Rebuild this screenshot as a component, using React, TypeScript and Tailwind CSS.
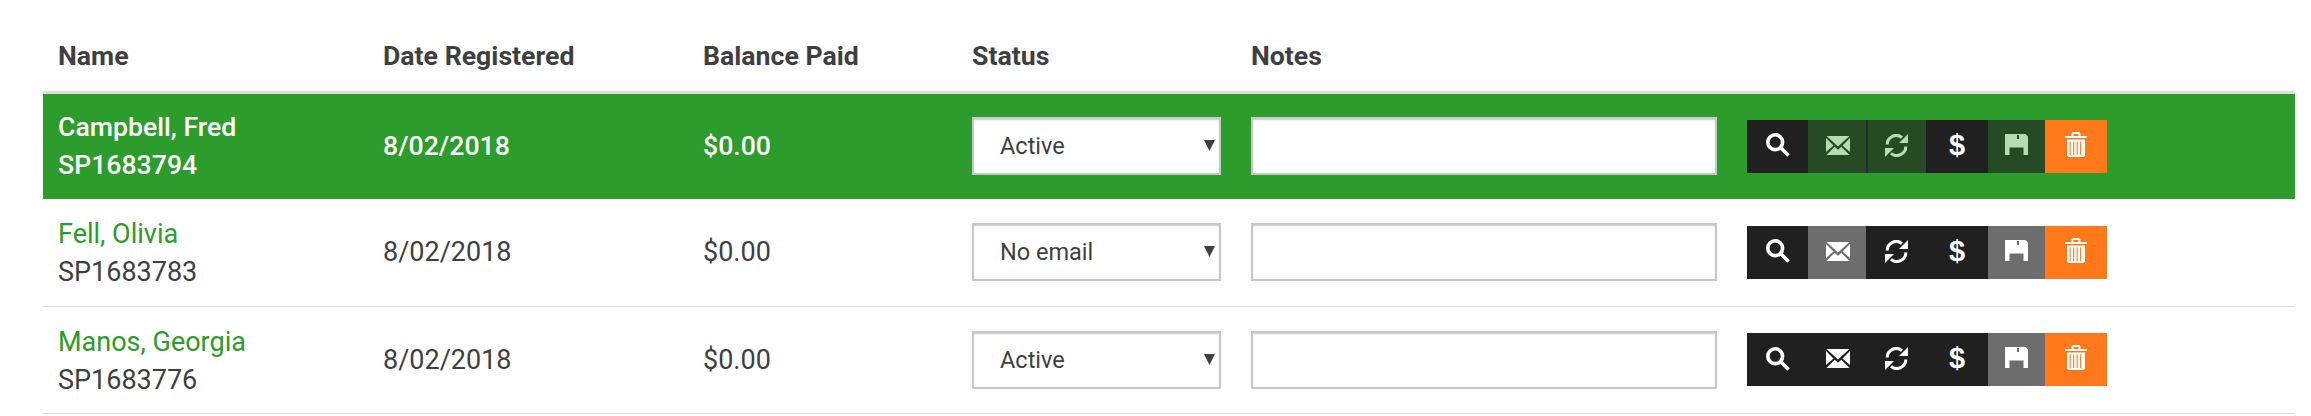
import { ReactNode } from "react";

type Member = {
  name: string;
  id: string;
  date: string;
  balance: string;
  status: string;
  selected?: boolean;
  mailOff?: boolean;
  refreshOff?: boolean;
};

const members: Member[] = [
  { name: "Campbell, Fred", id: "SP1683794", date: "8/02/2018", balance: "$0.00", status: "Active", selected: true, mailOff: true, refreshOff: true },
  { name: "Fell, Olivia", id: "SP1683783", date: "8/02/2018", balance: "$0.00", status: "No email", mailOff: true },
  { name: "Manos, Georgia", id: "SP1683776", date: "8/02/2018", balance: "$0.00", status: "Active" },
];

const SearchIcon = () => (
  <svg width="24" height="24" viewBox="0 0 24 24" fill="none" stroke="currentColor" strokeWidth="3.6">
    <circle cx="9.2" cy="9.2" r="7.4" />
    <path d="M14 14l8.5 8.5" />
  </svg>
);

const MailIcon = () => (
  <svg width="24" height="19" viewBox="0 0 24 19" fill="currentColor">
    <path d="M0.5 0H23.5L12 10.5Z" />
    <path d="M0 2L7.5 9.5L0 16Z" />
    <path d="M24 2L16.5 9.5L24 16Z" />
    <path d="M8.7 10.7L12 13.8L15.3 10.7L23.5 19H0.5Z" />
  </svg>
);

const RefreshIcon = () => (
  <svg width="23" height="23" viewBox="0 0 23 23" fill="currentColor">
    <path d="M2.2 10.5A9 9 0 0 1 17 3.6" fill="none" stroke="currentColor" strokeWidth="3" />
    <path d="M23 0V9H14Z" />
    <path d="M20.8 12.5A9 9 0 0 1 6 19.4" fill="none" stroke="currentColor" strokeWidth="3" />
    <path d="M0 23V14H9Z" />
  </svg>
);

const SaveIcon = () => (
  <svg width="23" height="21" viewBox="0 0 23 21" fill="currentColor">
    <path
      fillRule="evenodd"
      d="M0 0H20.5L23 2.5V21H18.5V13.5H4.5V21H0ZM12 1V5H14V1Z"
    />
  </svg>
);

const TrashIcon = () => (
  <svg width="22" height="25" viewBox="0 0 22 25" fill="currentColor">
    <path fillRule="evenodd" d="M6.5 4V1.5L8 0H14L15.5 1.5V4H22V6H0V4ZM8.5 4H13.5V2H8.5Z" />
    <path d="M2 7.5H20V23.5L18.5 25H3.5L2 23.5Z" />
    <g fill="#ff7819">
      <rect x="4.6" y="9.5" width="1.1" height="13.5" />
      <rect x="8.1" y="9.5" width="1.1" height="13.5" />
      <rect x="11.6" y="9.5" width="1.1" height="13.5" />
      <rect x="15.1" y="9.5" width="1.1" height="13.5" />
    </g>
  </svg>
);

const ActionButton = ({
  children,
  width,
  off,
  orange,
}: {
  children: ReactNode;
  width: string;
  off?: boolean;
  orange?: boolean;
}) => (
  <button
    type="button"
    className={`relative flex h-[53px] shrink-0 items-center justify-center text-white ${width} ${orange ? "bg-[#ff7819]" : "bg-[#202020]"} ${off ? "opacity-65" : ""}`}
  >
    {children}
  </button>
);

const Row = ({ member }: { member: Member }) => {
  const cell = "px-[15px] align-middle";
  return (
    <tr
      className={
        member.selected
          ? "h-[107px] bg-[#2c9c2c] text-[26.67px] font-medium text-white"
          : "h-[107px] border-b-[1px] border-[#dddddd] text-[#3f3f3f]"
      }
    >
      <td className={`${cell} ${member.selected ? "" : "pt-[2px]"}`}>
        <a href="#" className={member.selected ? "block text-white" : "block text-[#2c9c2c]"}>
          {member.name}
        </a>
        <div>{member.id}</div>
      </td>
      <td className={cell}>{member.date}</td>
      <td className={cell}>{member.balance}</td>
      <td className={cell}>
        <div className="relative h-[58px] w-[249px]">
          <select
            defaultValue={member.status}
            className="h-full w-full appearance-none border-2 border-[#c8c8c8] bg-white pl-[26px] text-[23.5px] font-normal text-[#3f3f3f] shadow-[inset_0_1px_0_#d4d4d4,inset_0_2px_2px_rgba(0,0,0,0.05)]"
          >
            <option>Active</option>
            <option>No email</option>
          </select>
          <svg className="pointer-events-none absolute right-[6px] top-[23px]" width="11" height="11" viewBox="0 0 11 11" fill="#3f3f3f">
            <path d="M0 0H11L5.5 11Z" />
          </svg>
        </div>
      </td>
      <td className={cell}>
        <input
          type="text"
          className="block h-[58px] w-[466px] border-2 border-[#c8c8c8] bg-white shadow-[inset_0_1px_0_#d4d4d4,inset_0_2px_2px_rgba(0,0,0,0.05)]"
        />
      </td>
      <td className={cell}>
        <div className="flex">
          <ActionButton width="w-[61px] pb-[2px]"><SearchIcon /></ActionButton>
          <ActionButton width="w-[60px] -mr-[2px] pb-[2px]" off={member.mailOff}><MailIcon /></ActionButton>
          <ActionButton width="w-[60px] pb-[2px]" off={member.refreshOff}><RefreshIcon /></ActionButton>
          <ActionButton width="w-[62px] pb-[2px]">
            <span className="font-['Liberation_Sans',sans-serif] text-[29px] font-bold leading-none">$</span>
          </ActionButton>
          <ActionButton width="w-[57px] pb-[4px]" off><SaveIcon /></ActionButton>
          <ActionButton width="w-[62px] pb-[4px]" orange><TrashIcon /></ActionButton>
        </div>
      </td>
    </tr>
  );
};

export default function App() {
  return (
    <div className="h-[416px] overflow-hidden bg-white pl-[43px] pr-[16px] font-['Roboto',sans-serif] text-[27px] leading-[38px]">
      <table className="w-[2252px] table-fixed border-collapse">
        <colgroup>
          <col className="w-[325px]" />
          <col className="w-[320px]" />
          <col className="w-[269px]" />
          <col className="w-[279px]" />
          <col className="w-[496px]" />
          <col className="w-[563px]" />
        </colgroup>
        <thead>
          <tr className="h-[92px] border-b-[3px] border-[#dddddd] text-left text-[26.67px] text-[#3f3f3f]">
            <th className="px-[15px] pb-[16px] align-bottom font-bold">Name</th>
            <th className="px-[15px] pb-[16px] align-bottom font-bold">Date Registered</th>
            <th className="px-[15px] pb-[16px] align-bottom font-bold">Balance Paid</th>
            <th className="px-[15px] pb-[16px] align-bottom font-bold">Status</th>
            <th className="px-[15px] pb-[16px] align-bottom font-bold">Notes</th>
            <th />
          </tr>
        </thead>
        <tbody>
          {members.map((member) => (
            <Row key={member.id} member={member} />
          ))}
        </tbody>
      </table>
    </div>
  );
}
